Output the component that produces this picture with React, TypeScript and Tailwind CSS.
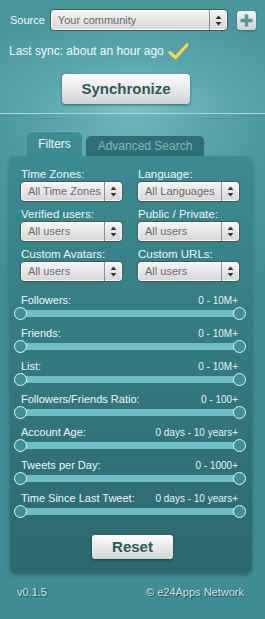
import React from "react";

const font = { fontFamily: '"Liberation Sans", Arial, sans-serif' };

function Arrows() {
  return (
    <svg width="7" height="11" viewBox="0 0 7 11">
      <path d="M3.5 0.5 L6.5 4 L0.5 4 Z" fill="#333" />
      <path d="M3.5 10.5 L6.5 7 L0.5 7 Z" fill="#333" />
    </svg>
  );
}

function Select({ value, className }: { value: string; className?: string }) {
  return (
    <div
      className={
        "flex items-stretch rounded-[4px] border border-[#4a5556] bg-gradient-to-b from-[#f6f6f6] to-[#d6d6d6] shadow-[inset_0_0_0_1px_rgba(255,255,255,0.85)] " +
        (className ?? "")
      }
    >
      <div className="flex flex-1 items-center overflow-hidden whitespace-nowrap pl-[7px] text-[11px] text-[#6a6a6a]">{value}</div>
      <div className="flex w-[18px] items-center justify-center border-l border-[#8c9090]">
        <Arrows />
      </div>
    </div>
  );
}

function Slider({ label, value }: { label: string; value: string }) {
  return (
    <div className="flex flex-col">
      <div className="flex h-[14px] items-center justify-between pl-[1px] pr-[2px]">
        <span className="text-[11px] text-[#eef7f7]">{label}</span>
        <span className="text-[10px] text-[#e6f3f3]">{value}</span>
      </div>
      <div className="relative mt-[3px] h-[7px] rounded-[2px] bg-[#6fbec5]">
        <div className="absolute left-[-6px] top-[-3px] h-[13px] w-[13px] rounded-full border-[1.5px] border-[#e4f5f6] bg-[#3f8f95]" />
        <div className="absolute right-[-6px] top-[-3px] h-[13px] w-[13px] rounded-full border-[1.5px] border-[#e4f5f6] bg-[#3f8f95]" />
      </div>
    </div>
  );
}

export default function App() {
  return (
    <div style={font} className="flex h-[619px] w-[265px] flex-col overflow-hidden bg-[#3f8e95]">
      {/* Top area */}
      <div className="h-[113px] bg-[radial-gradient(ellipse_70%_90%_at_50%_100%,#7cc2c8_0%,#5aa6ad_55%,#4a979e_100%)]">
        <div className="flex items-center pl-[10px] pt-[9px]">
          <span className="text-[11px] text-[#f2fafa]">Source</span>
          <Select value="Your community" className="ml-[5px] h-[22px] w-[178px]" />
          <div className="ml-[9px] flex h-[19px] w-[19px] items-center justify-center rounded-[3px] bg-gradient-to-b from-[#f2f2f2] to-[#cfd3d3] shadow-[0_1px_2px_rgba(0,0,0,0.35)]">
            <svg width="13" height="13" viewBox="0 0 13 13">
              <rect x="4.75" y="0.5" width="3.5" height="12" fill="#5f9398" />
              <rect x="0.5" y="4.75" width="12" height="3.5" fill="#5f9398" />
            </svg>
          </div>
        </div>
        <div className="mt-[11px] flex items-center pl-[9px]">
          <span className="text-[12px] text-[#f2fafa]">Last sync: about an hour ago</span>
          <svg className="ml-[4px]" width="21" height="17" viewBox="0 0 21 17">
            <path d="M2 9.5 L7.5 14.5 L19 2" fill="none" stroke="#f7d848" strokeWidth="3.2" strokeLinecap="round" strokeLinejoin="round" />
          </svg>
        </div>
        <div className="ml-[62px] mt-[14px] flex h-[30px] w-[128px] items-center justify-center rounded-[4px] bg-gradient-to-b from-[#fdfdfd] to-[#d2d4d4] shadow-[0_1px_3px_rgba(0,0,0,0.45)]">
          <span className="text-[15px] font-bold text-[#2f585d]">Synchronize</span>
        </div>
      </div>
      <div className="h-[1px] bg-[#a9d9dc]" />

      {/* Bottom area */}
      <div className="flex flex-1 flex-col bg-[radial-gradient(ellipse_80%_40%_at_50%_0%,#6db5bb_0%,#4c9aa1_60%,#3f8e95_100%)]">
        {/* Tabs */}
        <div className="mt-[18px] flex items-end pl-[27px]">
          <div className="flex h-[24px] w-[55px] items-center justify-center rounded-t-[5px] bg-[#3c8c93] shadow-[0_-1px_0_rgba(255,255,255,0.15)]">
            <span className="text-[12px] text-[#eef8f8]">Filters</span>
          </div>
          <div className="ml-[4px] flex h-[20px] w-[118px] items-center justify-center rounded-t-[5px] bg-[#2d6f75]">
            <span className="text-[12px] text-[#82b6ba]">Advanced Search</span>
          </div>
        </div>

        {/* Panel */}
        <div className="ml-[10px] h-[417px] w-[242px] rounded-[6px] rounded-tl-[4px] bg-gradient-to-b from-[#3b8b92] to-[#2c686e] pl-[10px] pr-[12px] pt-[11px] shadow-[0_2px_4px_rgba(0,0,0,0.3)]">
          <div className="grid grid-cols-2 gap-x-[14px] gap-y-[5px]">
            {[
              ["Time Zones:", "All Time Zones"],
              ["Language:", "All Languages"],
              ["Verified users:", "All users"],
              ["Public / Private:", "All users"],
              ["Custom Avatars:", "All users"],
              ["Custom URLs:", "All users"],
            ].map(([l, v]) => (
              <div key={l} className="flex flex-col">
                <span className="h-[14px] pl-[1px] text-[11.5px] leading-[14px] text-[#eef7f7]">{l}</span>
                <Select value={v} className="h-[21px]" />
              </div>
            ))}
          </div>

          <div className="mt-[11px] flex flex-col gap-[9px]">
            <Slider label="Followers:" value="0 - 10M+" />
            <Slider label="Friends:" value="0 - 10M+" />
            <Slider label="List:" value="0 - 10M+" />
            <Slider label="Followers/Friends Ratio:" value="0 - 100+" />
            <Slider label="Account Age:" value="0 days - 10 years+" />
            <Slider label="Tweets per Day:" value="0 - 1000+" />
            <Slider label="Time Since Last Tweet:" value="0 days - 10 years+" />
          </div>

          <div className="ml-[72px] mt-[20px] flex h-[24px] w-[81px] items-center justify-center rounded-[3px] bg-gradient-to-b from-[#fdfdfd] to-[#d3d5d5] shadow-[0_1px_3px_rgba(0,0,0,0.4)]">
            <span className="text-[15px] font-bold text-[#2f585d]">Reset</span>
          </div>
        </div>

        {/* Footer */}
        <div className="mt-[11px] flex items-center justify-between pl-[17px] pr-[21px]">
          <span className="text-[11px] text-[#d4e2e2] [text-shadow:1px_1px_1px_rgba(0,0,0,0.5)]">v0.1.5</span>
          <span className="text-[11px] text-[#d4e2e2] [text-shadow:1px_1px_1px_rgba(0,0,0,0.5)]">© e24Apps Network</span>
        </div>
      </div>
    </div>
  );
}
